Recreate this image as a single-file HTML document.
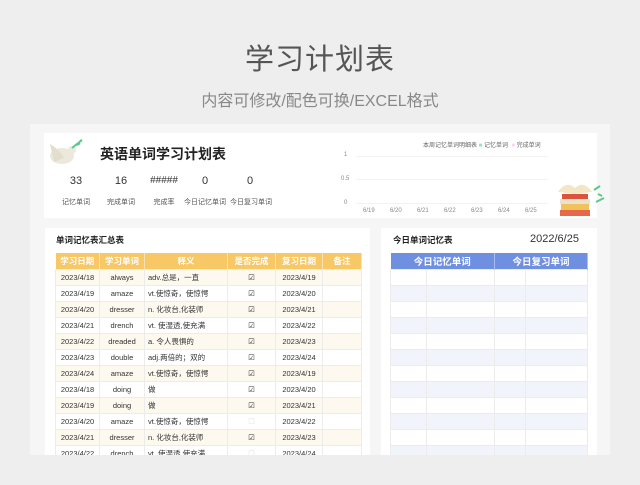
<!DOCTYPE html>
<html><head><meta charset="utf-8"><style>
*{margin:0;padding:0;box-sizing:border-box}
body{width:640px;height:485px;background:#eeeeee;font-family:"Liberation Sans","Noto Sans CJK SC",sans-serif;position:relative;overflow:hidden;color:#333}
.a{position:absolute}
.t1{left:0;width:640px;top:36px;text-align:center;font-size:29px;color:#555;letter-spacing:1px}
.t2{left:0;width:640px;top:87px;text-align:center;font-size:16px;color:#888}
.cont{left:30px;top:124px;width:580px;height:331px;background:#f6f6f6}
.panel{background:#fff}
table{border-collapse:collapse;position:absolute;table-layout:fixed}
td{height:16px;font-size:7.5px;border:1px solid #ececec;text-align:center;white-space:nowrap;overflow:hidden;color:#333}
.lt th{background:#f8c766;color:#fff;font-size:8.5px;height:16px;font-weight:bold;border-right:1px solid #fbe3b3}
.lt tr:nth-child(even) td{background:#fdf9ee}
.lt td.l{text-align:left;padding-left:3px}
.rt th{background:#6f8fe0;color:#fff;font-size:9.5px;height:16px;font-weight:bold;border-right:1px solid #aabbef}
.rt tr:nth-child(odd) td{background:#f1f4fa}
.st{font-size:11px;color:#333;text-align:center}
.sl{font-size:7px;color:#555;text-align:center}
.cl{font-size:6px;color:#888}
</style></head><body>
<div class="a t1">学习计划表</div>
<div class="a t2">内容可修改/配色可换/EXCEL格式</div>
<div class="a cont"></div>
<div class="a panel" style="left:44px;top:133px;width:553px;height:85px"></div>
<!-- dove -->
<svg class="a" style="left:46px;top:136px" width="40" height="36"><ellipse cx="16" cy="20" rx="12" ry="8" fill="#ece8dc"/><path d="M4 8 Q14 14 18 22 L8 26Z" fill="#e2ddcc"/><circle cx="26" cy="14" r="4" fill="#eee9dd"/><path d="M26 12 L36 4" stroke="#5cc98a" stroke-width="2"/><path d="M30 9 l3 -1 M32 7 l2 1 M34 5 l2 -1" stroke="#5cc98a" stroke-width="2"/></svg>
<div class="a" style="left:100px;top:144px;font-size:14px;font-weight:bold;color:#222">英语单词学习计划表</div>
<div class="a st" style="left:56px;top:175px;width:40px">33</div>
<div class="a st" style="left:101px;top:175px;width:40px">16</div>
<div class="a st" style="left:144px;top:175px;width:40px;font-size:10px">#####</div>
<div class="a st" style="left:185px;top:175px;width:40px">0</div>
<div class="a st" style="left:230px;top:175px;width:40px">0</div>
<div class="a sl" style="left:56px;top:197px;width:40px">记忆单词</div>
<div class="a sl" style="left:101px;top:197px;width:40px">完成单词</div>
<div class="a sl" style="left:144px;top:197px;width:40px">完成率</div>
<div class="a sl" style="left:180px;top:197px;width:50px">今日记忆单词</div>
<div class="a sl" style="left:226px;top:197px;width:50px">今日复习单词</div>
<!-- chart -->
<div class="a cl" style="left:423px;top:140px;color:#666">本周记忆单词明细表 <span style="color:#9be0c8">■</span> 记忆单词 &nbsp;<span style="color:#f1d8ec">■</span> 完成单词</div>
<div class="a cl" style="left:344px;top:152px">1</div>
<div class="a cl" style="left:341px;top:176px">0.5</div>
<div class="a cl" style="left:344px;top:200px">0</div>
<div class="a" style="left:356px;top:156px;width:192px;border-top:1px solid #f2f2f2"></div>
<div class="a" style="left:356px;top:179px;width:192px;border-top:1px solid #f2f2f2"></div>
<div class="a" style="left:356px;top:203px;width:192px;border-top:1px solid #f2f2f2"></div>
<div class="a cl" style="left:363px;top:208px">6/19</div>
<div class="a cl" style="left:390px;top:208px">6/20</div>
<div class="a cl" style="left:417px;top:208px">6/21</div>
<div class="a cl" style="left:444px;top:208px">6/22</div>
<div class="a cl" style="left:471px;top:208px">6/23</div>
<div class="a cl" style="left:498px;top:208px">6/24</div>
<div class="a cl" style="left:525px;top:208px">6/25</div>
<!-- books -->
<svg class="a" style="left:552px;top:178px" width="54" height="40"><rect x="8" y="32" width="30" height="6" fill="#e8684a"/><rect x="9" y="26" width="28" height="6" fill="#f0c25a"/><rect x="8" y="21" width="30" height="5" fill="#e9e2cf"/><rect x="10" y="16" width="26" height="5" fill="#d9533d"/><path d="M6 14 Q14 2 23 10 Q32 2 40 14 L23 16Z" fill="#f3e6c4"/><path d="M42 12 l6 -4 M44 24 l8 -4 M46 16 l4 2" stroke="#5cc98a" stroke-width="2"/></svg>
<!-- left panel -->
<div class="a panel" style="left:45px;top:228px;width:325px;height:227px"></div>
<div class="a" style="left:56px;top:234px;font-size:8.5px;font-weight:bold;color:#222">单词记忆表汇总表</div>
<table class="lt" style="left:55px;top:253px;width:306px">
<colgroup><col style="width:44px"><col style="width:45px"><col style="width:83px"><col style="width:48px"><col style="width:47px"><col style="width:39px"></colgroup>
<tr><th>学习日期</th><th>学习单词</th><th>释义</th><th>是否完成</th><th>复习日期</th><th>备注</th></tr>
<tr><td>2023/4/18</td><td>always</td><td class="l">adv.总是，一直</td><td>☑</td><td>2023/4/19</td><td></td></tr>
<tr><td>2023/4/19</td><td>amaze</td><td class="l">vt.使惊奇，使惊愕</td><td>☑</td><td>2023/4/20</td><td></td></tr>
<tr><td>2023/4/20</td><td>dresser</td><td class="l">n. 化妆台,化装师</td><td>☑</td><td>2023/4/21</td><td></td></tr>
<tr><td>2023/4/21</td><td>drench</td><td class="l">vt. 使湿透,使充满</td><td>☑</td><td>2023/4/22</td><td></td></tr>
<tr><td>2023/4/22</td><td>dreaded</td><td class="l">a. 令人畏惧的</td><td>☑</td><td>2023/4/23</td><td></td></tr>
<tr><td>2023/4/23</td><td>double</td><td class="l">adj.两倍的；双的</td><td>☑</td><td>2023/4/24</td><td></td></tr>
<tr><td>2023/4/24</td><td>amaze</td><td class="l">vt.使惊奇，使惊愕</td><td>☑</td><td>2023/4/19</td><td></td></tr>
<tr><td>2023/4/18</td><td>doing</td><td class="l">做</td><td>☑</td><td>2023/4/20</td><td></td></tr>
<tr><td>2023/4/19</td><td>doing</td><td class="l">做</td><td>☑</td><td>2023/4/21</td><td></td></tr>
<tr><td>2023/4/20</td><td>amaze</td><td class="l">vt.使惊奇，使惊愕</td><td style="color:#ddd">☐</td><td>2023/4/22</td><td></td></tr>
<tr><td>2023/4/21</td><td>dresser</td><td class="l">n. 化妆台,化装师</td><td>☑</td><td>2023/4/23</td><td></td></tr>
<tr><td>2023/4/22</td><td>drench</td><td class="l">vt. 使湿透,使充满</td><td style="color:#ddd">☐</td><td>2023/4/24</td><td></td></tr>
</table>
<!-- right panel -->
<div class="a panel" style="left:381px;top:228px;width:216px;height:227px"></div>
<div class="a" style="left:393px;top:234px;font-size:8.5px;font-weight:bold;color:#222">今日单词记忆表</div>
<div class="a" style="left:530px;top:233px;font-size:11px;color:#333">2022/6/25</div>
<table class="rt" style="left:390px;top:253px;width:197px">
<colgroup><col style="width:36px"><col style="width:68px"><col style="width:31px"><col style="width:62px"></colgroup>
<tr><th colspan="2">今日记忆单词</th><th colspan="2">今日复习单词</th></tr>
<tr><td></td><td></td><td></td><td></td></tr><tr><td></td><td></td><td></td><td></td></tr>
<tr><td></td><td></td><td></td><td></td></tr><tr><td></td><td></td><td></td><td></td></tr>
<tr><td></td><td></td><td></td><td></td></tr><tr><td></td><td></td><td></td><td></td></tr>
<tr><td></td><td></td><td></td><td></td></tr><tr><td></td><td></td><td></td><td></td></tr>
<tr><td></td><td></td><td></td><td></td></tr><tr><td></td><td></td><td></td><td></td></tr>
<tr><td></td><td></td><td></td><td></td></tr><tr><td></td><td></td><td></td><td></td></tr>
</table>
<div class="a" style="left:0;top:455px;width:640px;height:30px;background:#eeeeee"></div>
</body></html>
